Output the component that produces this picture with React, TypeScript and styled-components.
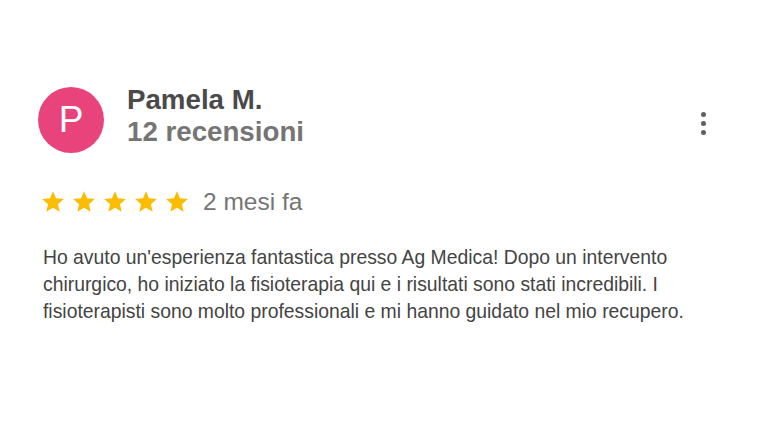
import styled, { createGlobalStyle } from 'styled-components';

const GlobalStyle = createGlobalStyle`
  html, body {
    margin: 0;
    padding: 0;
    background: #ffffff;
  }
  body {
    font-family: "Liberation Sans", Arial, sans-serif;
  }
`;

const Card = styled.div`
  width: 768px;
  height: 433px;
  box-sizing: border-box;
  padding: 84px 40px 0 42px;
  display: flex;
  flex-direction: column;
`;

const Header = styled.div`
  display: flex;
  align-items: flex-start;
`;

const Avatar = styled.div<{ $color: string }>`
  width: 66px;
  height: 66px;
  margin: 3px 23px 0 -4px;
  border-radius: 50%;
  background: ${p => p.$color};
  color: #ffffff;
  display: flex;
  align-items: center;
  justify-content: center;
  font-size: 37px;
  font-weight: 400;
  flex-shrink: 0;
`;

const Author = styled.div`
  display: flex;
  flex-direction: column;
  flex: 1;
  font-weight: 700;
  font-size: 27.7px;
  line-height: 32px;
`;

const Name = styled.div`
  color: #4a4a4a;
`;

const Count = styled.div`
  color: #757575;
`;

const MenuButton = styled.button`
  border: none;
  background: none;
  padding: 0;
  margin: 28px 21px 0 0;
  width: 8px;
  display: flex;
  flex-direction: column;
  align-items: center;
  gap: 4px;
  cursor: pointer;

  span {
    width: 5px;
    height: 5px;
    border-radius: 50%;
    background: #5f5f5f;
  }
`;

const RatingRow = styled.div`
  display: flex;
  align-items: center;
  margin-top: 35px;
  gap: 13px;
`;

const Stars = styled.div`
  display: flex;
  gap: 5px;
  margin-left: -2px;
`;

const Ago = styled.span`
  font-size: 24.5px;
  color: #757575;
  line-height: 28px;
`;

const Body = styled.p`
  margin: 28px 0 0 1px;
  max-width: 660px;
  font-size: 19.35px;
  line-height: 27px;
  color: #444444;
`;

const Star = () => (
  <svg width="26" height="26" viewBox="0 0 24 24">
    <path
      fill="#fbbc04"
      d="M12 17.27L18.18 21l-1.64-7.03L22 9.24l-7.19-.61L12 2 9.19 8.63 2 9.24l5.46 4.73L5.82 21z"
    />
  </svg>
);

export default function App() {
  return (
    <>
      <GlobalStyle />
      <Card>
        <Header>
          <Avatar $color="#e8437a">P</Avatar>
          <Author>
            <Name>Pamela M.</Name>
            <Count>12 recensioni</Count>
          </Author>
          <MenuButton aria-label="Altre opzioni">
            <span />
            <span />
            <span />
          </MenuButton>
        </Header>
        <RatingRow>
          <Stars>
            {[0, 1, 2, 3, 4].map(i => (
              <Star key={i} />
            ))}
          </Stars>
          <Ago>2 mesi fa</Ago>
        </RatingRow>
        <Body>
          Ho avuto un'esperienza fantastica presso Ag Medica! Dopo un intervento chirurgico, ho
          iniziato la fisioterapia qui e i risultati sono stati incredibili. I fisioterapisti sono
          molto professionali e mi hanno guidato nel mio recupero.
        </Body>
      </Card>
    </>
  );
}
